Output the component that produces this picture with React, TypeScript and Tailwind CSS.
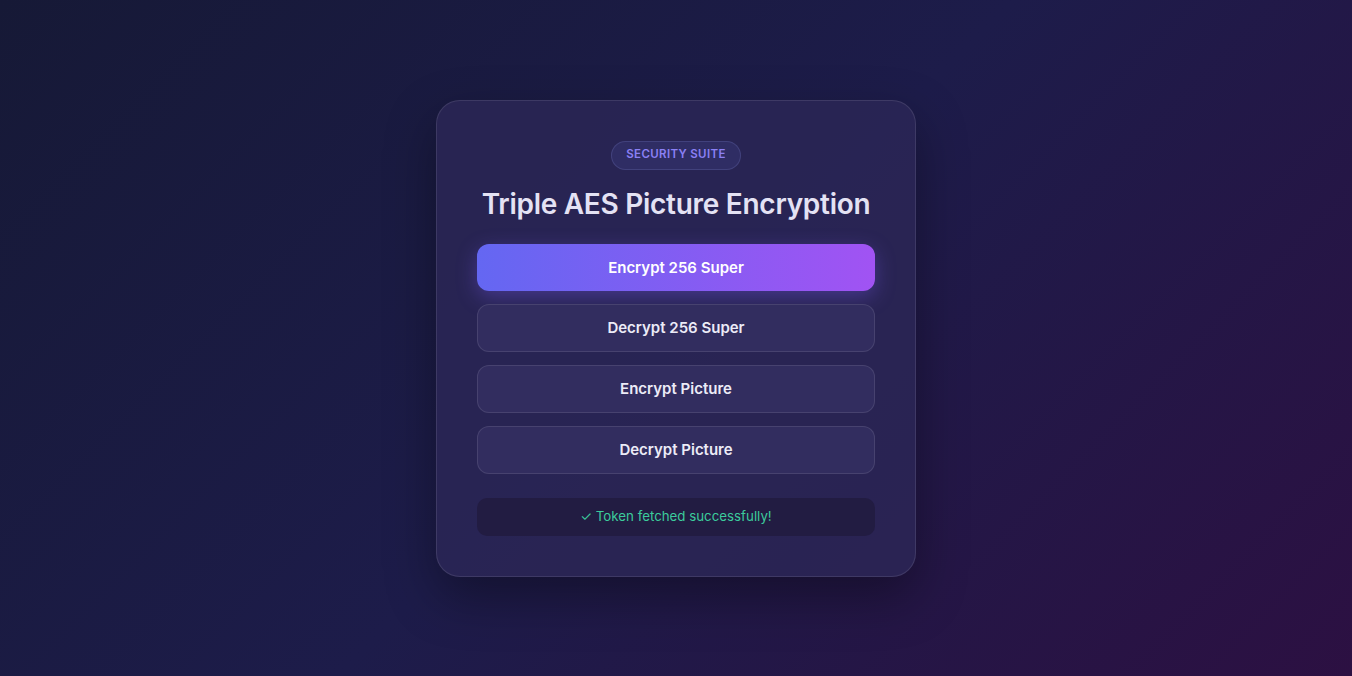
export default function App() {
  const buttons = ["Decrypt 256 Super", "Encrypt Picture", "Decrypt Picture"];
  return (
    <div
      className="min-h-screen w-full flex items-center justify-center bg-[linear-gradient(135deg,#161936_0%,#1d1c4a_50%,#2c1042_100%)]"
      style={{ fontFamily: "Inter, 'Noto Sans', sans-serif" }}
    >
      <div className="w-[480px] rounded-[24px] border border-white/10 bg-[#2c2756]/80 px-10 pt-10 pb-10 shadow-[0_20px_50px_rgba(0,0,0,0.35)] flex flex-col items-center">
        <span className="h-[29px] px-[14px] flex items-center rounded-full border border-indigo-300/15 bg-indigo-400/10 text-[11.5px] font-semibold tracking-[0.03em] text-[#8b80f5] uppercase">
          Security Suite
        </span>
        <h1 className="mt-[16px] text-[28px] leading-[36px] font-semibold text-[#e4e2f4] tracking-[-0.01em]">
          Triple AES Picture Encryption
        </h1>
        <div className="mt-[22px] w-full flex flex-col gap-[13px]">
          <button className="h-[47px] pt-[2px] w-full rounded-[12px] bg-[linear-gradient(90deg,#6467f2,#a153f3)] text-white text-[15px] font-semibold shadow-[0_6px_20px_rgba(124,92,246,0.35)]">
            Encrypt 256 Super
          </button>
          {buttons.map((b) => (
            <button
              key={b}
              className="h-[48px] pt-[2px] w-full rounded-[12px] border border-white/10 bg-[#322d5f] text-[#ecebf7] text-[15px] font-semibold"
            >
              {b}
            </button>
          ))}
        </div>
        <div className="mt-[24px] w-full h-[38px] pt-[1px] rounded-[10px] bg-[#221c42] flex items-center justify-center text-[13.3px] text-[#3ccb9c]">
          ✓ Token fetched successfully!
        </div>
      </div>
    </div>
  );
}
